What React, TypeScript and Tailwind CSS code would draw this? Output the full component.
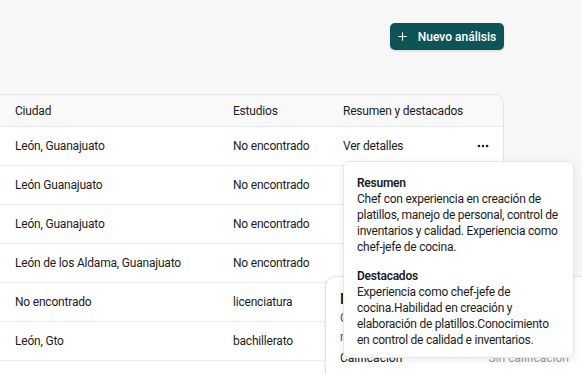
import { Plus, MoreHorizontal } from 'lucide-react';

const rows = [
  { ciudad: 'León, Guanajuato', estudios: 'No encontrado', resumen: true },
  { ciudad: 'León Guanajuato', estudios: 'No encontrado' },
  { ciudad: 'León, Guanajuato', estudios: 'No encontrado' },
  { ciudad: 'León de los Aldama, Guanajuato', estudios: 'No encontrado' },
  { ciudad: 'No encontrado', estudios: 'licenciatura' },
  { ciudad: 'León, Gto', estudios: 'bachillerato' },
  { ciudad: '', estudios: '' },
];

export default function App() {
  return (
    <div
      className="relative h-[374px] w-[582px] overflow-hidden bg-[#f7f7f7] text-[#1c1c1c]"
      style={{ fontFamily: 'Roboto, "Noto Sans", sans-serif' }}
    >
      <div className="w-[504px] pt-[23px]">
        <div className="flex justify-end">
          <button className="flex h-[27px] w-[114px] items-center justify-center gap-[9px] rounded-[5px] bg-[#0e5457] pr-[2px] text-[12px] font-medium text-white shadow-sm">
            <Plus size={13} strokeWidth={2} />
            Nuevo análisis
          </button>
        </div>

        <div className="mt-[44px] w-[504px] overflow-hidden rounded-tr-[10px] border-t border-r border-[#e3e3e3] bg-white text-[12px] tracking-[-0.2px]">
          <div className="flex h-[32px] items-center border-b border-[#e6e6e6] bg-[#f9f9f9]">
            <div className="w-[219px] pl-[15px]">Ciudad</div>
            <div className="w-[110px] pl-[14px]">Estudios</div>
            <div className="flex-1 pl-[14px]">Resumen y destacados</div>
          </div>
          {rows.map((r, i) => (
            <div key={i} className="flex h-[39px] items-center border-b border-[#ececec]">
              <div className="w-[219px] pl-[15px]">{r.ciudad}</div>
              <div className="w-[110px] pl-[14px]">{r.estudios}</div>
              <div className="flex flex-1 items-center justify-between pl-[14px] pr-[13px]">
                {r.resumen && (
                  <>
                    <span>Ver detalles</span>
                    <MoreHorizontal size={14} strokeWidth={2.5} />
                  </>
                )}
              </div>
            </div>
          ))}
        </div>
      </div>

      {/* card behind the popover */}
      <div className="absolute left-[325px] top-[276px] h-[120px] w-[280px] rounded-tl-[10px] border border-[#e3e3e3] bg-white px-[14px] pt-[12px] text-[12px] shadow-sm">
        <div className="text-[15px] font-semibold leading-[20px]">Nota</div>
        <div className="leading-[19px] text-[#555]">Comentarios del</div>
        <div className="leading-[19px] text-[#555]">mensaje</div>
        <div className="mt-[2px] flex items-center justify-between">
          <span>Calificación</span>
          <span className="pr-[21px] text-[#9a9a9a]">Sin calificación</span>
        </div>
      </div>

      {/* popover */}
      <div className="absolute left-[343px] top-[161px] w-[231px] rounded-[6px] border border-[#e6e6e6] bg-white px-[13px] pb-[9px] pt-[13px] text-[12px] leading-[16px] tracking-[-0.25px] shadow-[0_2px_8px_rgba(0,0,0,0.08)]">
        <div className="font-semibold">Resumen</div>
        <p>
          Chef con experiencia en creación de platillos, manejo de personal, control de inventarios y calidad. Experiencia como chef-jefe de cocina.
        </p>
        <div className="mt-[13px] font-semibold">Destacados</div>
        <p>
          Experiencia como chef-jefe de cocina.Habilidad en creación y elaboración de platillos.Conocimiento en control de calidad e inventarios.
        </p>
      </div>
    </div>
  );
}
